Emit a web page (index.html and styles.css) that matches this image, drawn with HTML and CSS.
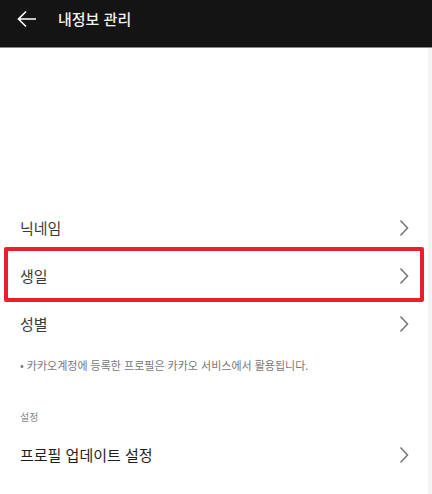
FILE: index.html
```html
<!DOCTYPE html>
<html lang="ko">
<head>
    <meta charset="UTF-8">
    <meta name="viewport" content="width=device-width, initial-scale=1.0">
    <title>내정보 관리</title>
    <link rel="stylesheet" href="styles.css">
</head>
<body>
    <header class="topbar">
        <span class="back">
            <svg width="20" height="18" viewBox="0 0 20 18">
                <path d="M19 9H2M9 1.5L1.5 9L9 16.5" fill="none" stroke="#fff" stroke-width="1.6"/>
            </svg>
        </span>
        <h1 class="title">내정보 관리</h1>
    </header>

    <div class="page">
        <main class="content">
            <ul class="list">
                <li class="row">
                    <span class="label">닉네임</span>
                    <svg class="chev" width="10" height="18" viewBox="0 0 10 18"><path d="M1.5 1.5L8.5 9L1.5 16.5" fill="none" stroke="#7a7a7a" stroke-width="1.6"/></svg>
                </li>
                <li class="row marked">
                    <span class="label">생일</span>
                    <svg class="chev" width="10" height="18" viewBox="0 0 10 18"><path d="M1.5 1.5L8.5 9L1.5 16.5" fill="none" stroke="#7a7a7a" stroke-width="1.6"/></svg>
                </li>
                <li class="row">
                    <span class="label">성별</span>
                    <svg class="chev" width="10" height="18" viewBox="0 0 10 18"><path d="M1.5 1.5L8.5 9L1.5 16.5" fill="none" stroke="#7a7a7a" stroke-width="1.6"/></svg>
                </li>
            </ul>

            <p class="note">• 카카오계정에 등록한 프로필은 카카오 서비스에서 활용됩니다.</p>

            <h2 class="section">설정</h2>
            <ul class="list">
                <li class="row">
                    <span class="label strong">프로필 업데이트 설정</span>
                    <svg class="chev" width="10" height="18" viewBox="0 0 10 18"><path d="M1.5 1.5L8.5 9L1.5 16.5" fill="none" stroke="#7a7a7a" stroke-width="1.6"/></svg>
                </li>
            </ul>
        </main>
        <div class="track"></div>
    </div>
</body>
</html>
```

FILE: styles.css
```css
body {
    margin: 0;
    width: 432px;
    height: 494px;
    overflow: hidden;
    background: #fff;
    font-family: "Noto Sans CJK KR", "Noto Sans", sans-serif;
}
.topbar {
    display: flex;
    align-items: center;
    height: 38px;
    padding-bottom: 9px;
    background: #141414;
    border-bottom: 1px solid #8a8a8a;
}
.back {
    display: flex;
    margin-left: 17px;
    width: 20px;
}
.title {
    margin: 0 0 0 21px;
    color: #f2f2f2;
    font-size: 15px;
    font-weight: 500;
    line-height: 20px;
}
.page {
    display: flex;
    height: 446px;
}
.content {
    flex: 1;
    padding-top: 156px;
}
.track {
    width: 4px;
    background: #f4f4f4;
}
.list {
    list-style: none;
    margin: 0;
    padding: 0;
}
.row {
    position: relative;
    display: flex;
    align-items: center;
    justify-content: space-between;
    height: 48px;
    padding: 0 19px 0 20px;
}
.marked::after {
    content: "";
    position: absolute;
    top: -5px;
    bottom: -2px;
    left: 4px;
    right: 4px;
    border: 4px solid #ea1f2b;
    border-radius: 2px;
}
.label {
    color: #3a3a3a;
    font-size: 15px;
    line-height: 20px;
}
.strong {
    color: #1e1e1e;
}
.chev {
    display: block;
}
.note {
    margin: 9px 0 0 20px;
    color: #777;
    font-size: 11px;
    line-height: 16px;
}
.section {
    margin: 37px 0 7px 20px;
    color: #8a8a8a;
    font-size: 10px;
    font-weight: 400;
    line-height: 14px;
}
```
